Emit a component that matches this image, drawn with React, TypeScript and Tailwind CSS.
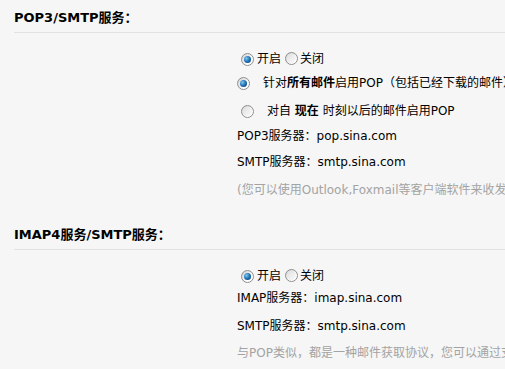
import React from "react";

function Radio({ checked }: { checked?: boolean }) {
  return (
    <span className="inline-flex w-[13px] h-[13px] shrink-0 items-center justify-center rounded-full border border-[#8e8e8e] bg-[linear-gradient(135deg,#d0d0d0,#ffffff_70%)]">
      {checked ? (
        <span className="block w-[7px] h-[7px] rounded-full bg-[radial-gradient(circle_at_35%_35%,#7cc6f2,#176aae_55%,#083a68)]" />
      ) : (
        <span className="block w-[9px] h-[9px] rounded-full bg-[linear-gradient(135deg,#e0e0e0,#fbfbfb)]" />
      )}
    </span>
  );
}

function Header({ children }: { children: React.ReactNode }) {
  return (
    <div className="ml-[14px] h-[33px] pt-[10px] border-b border-[#e2e2e2] leading-[15px] text-[13px] font-bold text-black">
      {children}
    </div>
  );
}

function Row({ children, className = "" }: { children: React.ReactNode; className?: string }) {
  return (
    <div className={"h-[20px] flex items-center whitespace-nowrap text-[12px] " + className}>
      {children}
    </div>
  );
}

export default function App() {
  return (
    <div
      className="w-[505px] h-[369px] overflow-hidden bg-[#f6f6f6] text-black"
      style={{ fontFamily: '"DejaVu Sans", "Noto Sans CJK SC", sans-serif' }}
    >
      <Header>POP3/SMTP服务：</Header>
      <div className="pl-[237px] pt-[16px]">
        <Row>
          <span className="w-[4px]" />
          <Radio checked />
          <span className="ml-[3px]">开启</span>
          <span className="ml-[4px]"><Radio /></span>
          <span className="ml-[2px]">关闭</span>
        </Row>
        <Row className="mt-[4px]">
          <span className="w-[4px]" />
          <Radio checked />
          <span className="ml-[13px]">
            针对<b>所有邮件</b>启用POP（包括已经下载的邮件）
          </span>
        </Row>
        <Row className="mt-[8px]">
          <span className="w-[4px]" />
          <Radio />
          <span className="ml-[13px]">
            对自 <b>现在</b> 时刻以后的邮件启用POP
          </span>
        </Row>
        <Row className="mt-[5px]">POP3服务器：pop.sina.com</Row>
        <Row className="mt-[6px]">SMTP服务器：smtp.sina.com</Row>
        <Row className="mt-[8px] text-[#a3a3a3]">(您可以使用Outlook,Foxmail等客户端软件来收发邮件)</Row>
      </div>
      <div className="mt-[17px]">
        <Header>IMAP4服务/SMTP服务：</Header>
      </div>
      <div className="pl-[237px] pt-[16px]">
        <Row>
          <span className="w-[4px]" />
          <Radio checked />
          <span className="ml-[3px]">开启</span>
          <span className="ml-[4px]"><Radio /></span>
          <span className="ml-[2px]">关闭</span>
        </Row>
        <Row className="mt-[2px]">IMAP服务器：imap.sina.com</Row>
        <Row className="mt-[8px]">SMTP服务器：smtp.sina.com</Row>
        <Row className="mt-[7px] text-[#a3a3a3]">与POP类似，都是一种邮件获取协议，您可以通过支持IMAP的客户端软件来收发邮件</Row>
      </div>
    </div>
  );
}
